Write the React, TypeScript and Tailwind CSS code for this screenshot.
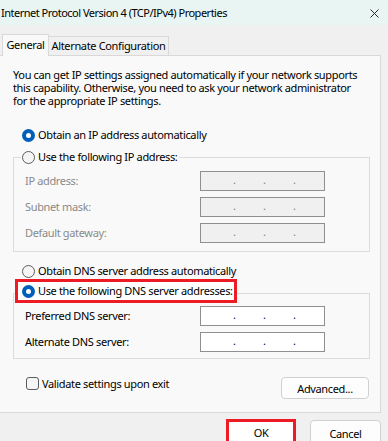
import React from "react";

const Radio = ({ checked = false }: { checked?: boolean }) =>
  checked ? (
    <span className="w-[13px] h-[13px] rounded-full bg-[#005fb8] flex items-center justify-center shrink-0">
      <span className="w-[5px] h-[5px] rounded-full bg-white" />
    </span>
  ) : (
    <span className="w-[13px] h-[13px] rounded-full border border-[#5c5c5c] bg-[#f5f5f5] shrink-0" />
  );

const IpBox = ({ disabled = false }: { disabled?: boolean }) => (
  <div
    className={
      disabled
        ? "w-[125px] h-[20px] border border-[#8f8f8f] bg-[#f0f0f0] flex items-start pl-[32px]"
        : "w-[125px] h-[20px] border border-[#8f8f8f] bg-white flex items-start pl-[32px]"
    }
  >
    {[0, 1, 2].map((i) => (
      <span
        key={i}
        className={
          disabled
            ? "w-[30px] text-[#7c7c98] leading-[16px]"
            : "w-[30px] text-[#00006e] leading-[16px]"
        }
      >
        .
      </span>
    ))}
  </div>
);

const Row = ({ label, disabled = false }: { label: string; disabled?: boolean }) => (
  <div className="flex items-center h-[20px]">
    <span className={disabled ? "w-[186px] pl-[11px] text-[#8a8a8a]" : "w-[186px] pl-[11px] text-black"}>
      {label}
    </span>
    <IpBox disabled={disabled} />
  </div>
);

export default function App() {
  return (
    <div
      className="w-[388px] h-[441px] bg-[#f0f0f0] overflow-hidden text-[11px] leading-[14px] tracking-[-0.35px] text-black whitespace-nowrap"
      style={{ fontFamily: '"Segoe UI", "Noto Sans", sans-serif' }}
    >
      {/* title bar */}
      <div className="h-[25px] bg-[#e8f5f2] flex items-center justify-between pl-[1px] pr-[9px]">
        <span className="tracking-[-0.5px]">Internet Protocol Version 4 (TCP/IPv4) Properties</span>
        <svg width="9" height="9" viewBox="0 0 9 9" className="mt-[1px]">
          <path d="M0.5 0.5 L8.5 8.5 M8.5 0.5 L0.5 8.5" stroke="#2b2b2b" strokeWidth="1" />
        </svg>
      </div>

      {/* tabs */}
      <div className="h-[30px] flex items-end pl-[2px]">
        <div className="relative z-10 h-[22px] w-[47px] -mb-[1px] bg-[#f9f9f9] border border-b-0 border-[#d9d9d9] flex items-center justify-center pb-[1px]">
          General
        </div>
        <div className="h-[19px] w-[120px] bg-[#f0f0f0] border border-l-0 border-b-0 border-[#d9d9d9] flex items-center justify-center">
          Alternate Configuration
        </div>
      </div>

      {/* panel */}
      <div className="-ml-[1px] w-[382px] h-[358px] bg-[#f9f9f9] border border-[#d9d9d9] pl-[13px]">
        <p className="mt-[12px] leading-[13px]">
          You can get IP settings assigned automatically if your network supports
          <br />
          this capability. Otherwise, you need to ask your network administrator
          <br />
          for the appropriate IP settings.
        </p>

        <div className="mt-[20px] h-[16px] ml-[9px] flex items-center gap-[3px]">
          <Radio checked />
          <span>Obtain an IP address automatically</span>
        </div>

        <div className="mt-[14px] w-[357px] border border-[#dcdcdc] pb-[8px]">
          <div className="-mt-[9px] ml-[7px] w-fit h-[16px] pl-[1px] pr-[2px] bg-[#f9f9f9] flex items-center gap-[3px]">
            <Radio />
            <span>Use the following IP address:</span>
          </div>
          <div className="mt-[6px] flex flex-col gap-[6px]">
            <Row label="IP address:" disabled />
            <Row label="Subnet mask:" disabled />
            <Row label="Default gateway:" disabled />
          </div>
        </div>

        <div className="mt-[11px] h-[16px] ml-[9px] flex items-center gap-[3px]">
          <Radio />
          <span>Obtain DNS server address automatically</span>
        </div>

        <div className="mt-[14px] w-[357px] border border-[#dcdcdc] pb-[6px]">
          <div className="-mt-[15px] ml-[1px] w-[222px] h-[24px] border-[3px] border-[#ed1c24] bg-white pl-[4px] flex items-center gap-[3px]">
            <Radio checked />
            <span>Use the following DNS server addresses:</span>
          </div>
          <div className="mt-[3px] flex flex-col gap-[6px]">
            <Row label="Preferred DNS server:" />
            <Row label="Alternate DNS server:" />
          </div>
        </div>

        <div className="mt-[18px] w-[357px] flex justify-between items-start">
          <div className="ml-[13px] flex items-center gap-[3px] h-[13px]">
            <span className="w-[13px] h-[13px] rounded-[3px] border border-[#5c5c5c] bg-[#f5f5f5]" />
            <span>Validate settings upon exit</span>
          </div>
          <button className="mr-[1px] w-[88px] h-[22px] rounded-[4px] border border-[#d0d0d0] bg-[#fdfdfd] pt-[1px]">
            Advanced...
          </button>
        </div>
      </div>

      {/* footer buttons */}
      <div className="mt-[6px] flex justify-end pr-[7px] gap-[14px]">
        <div className="w-[70px] h-[26px] border-[3px] border-[#ed1c24] bg-white flex items-center justify-center pt-[2px]">
          OK
        </div>
        <button className="mt-[1px] w-[71px] h-[26px] rounded-[4px] border border-[#d0d0d0] bg-[#fdfdfd] pt-[1px]">
          Cancel
        </button>
      </div>
    </div>
  );
}
